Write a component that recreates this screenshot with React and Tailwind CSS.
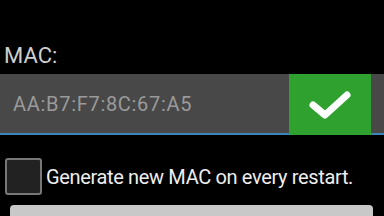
const CheckIcon = () => (
    <svg width="44" height="30" viewBox="0 0 44 30" fill="none">
        <path d="M5 15 L17 25 L39 5" stroke="#ffffff" strokeWidth="7" strokeLinecap="round" strokeLinejoin="round" />
    </svg>
);

export default function App() {
    return (
        <div className="h-[216px] w-[384px] overflow-hidden bg-black" style={{ fontFamily: "Roboto, 'Noto Sans', sans-serif" }}>
            <div className="h-[42px]" />
            <div className="pl-[4px] text-[22px] leading-[28px] text-[#cfcfcf]">MAC:</div>
            <div className="mt-[4px] flex h-[61px] items-stretch">
                <div className="flex flex-1 flex-col">
                    <div className="flex flex-1 items-center bg-[#484848] pl-[13px] text-[20px] tracking-[0.7px] text-[#9a9a9a]">
                        AA:B7:F7:8C:67:A5
                    </div>
                    <div className="h-[2px] bg-[#3a84b8]" />
                </div>
                <button className="flex w-[82px] items-center justify-center bg-[#2ea12e] pt-[1px]">
                    <CheckIcon />
                </button>
                <div className="flex w-[13px] flex-col">
                    <div className="flex-1 bg-[#484848]" />
                    <div className="h-[2px] bg-[#3a84b8]" />
                </div>
            </div>
            <div className="mt-[23px] flex items-center pl-[5px]">
                <div className="h-[37px] w-[37px] rounded-[3px] border-2 border-[#777777] bg-[#222222]" />
                <span className="ml-[4px] text-[20px] tracking-[-0.35px] text-[#eeeeee]">Generate new MAC on every restart.</span>
            </div>
            <div className="mx-[10px] mt-[10px] h-[20px] w-[363px] rounded-[4px] bg-[#c8c8c8]" />
        </div>
    );
}
